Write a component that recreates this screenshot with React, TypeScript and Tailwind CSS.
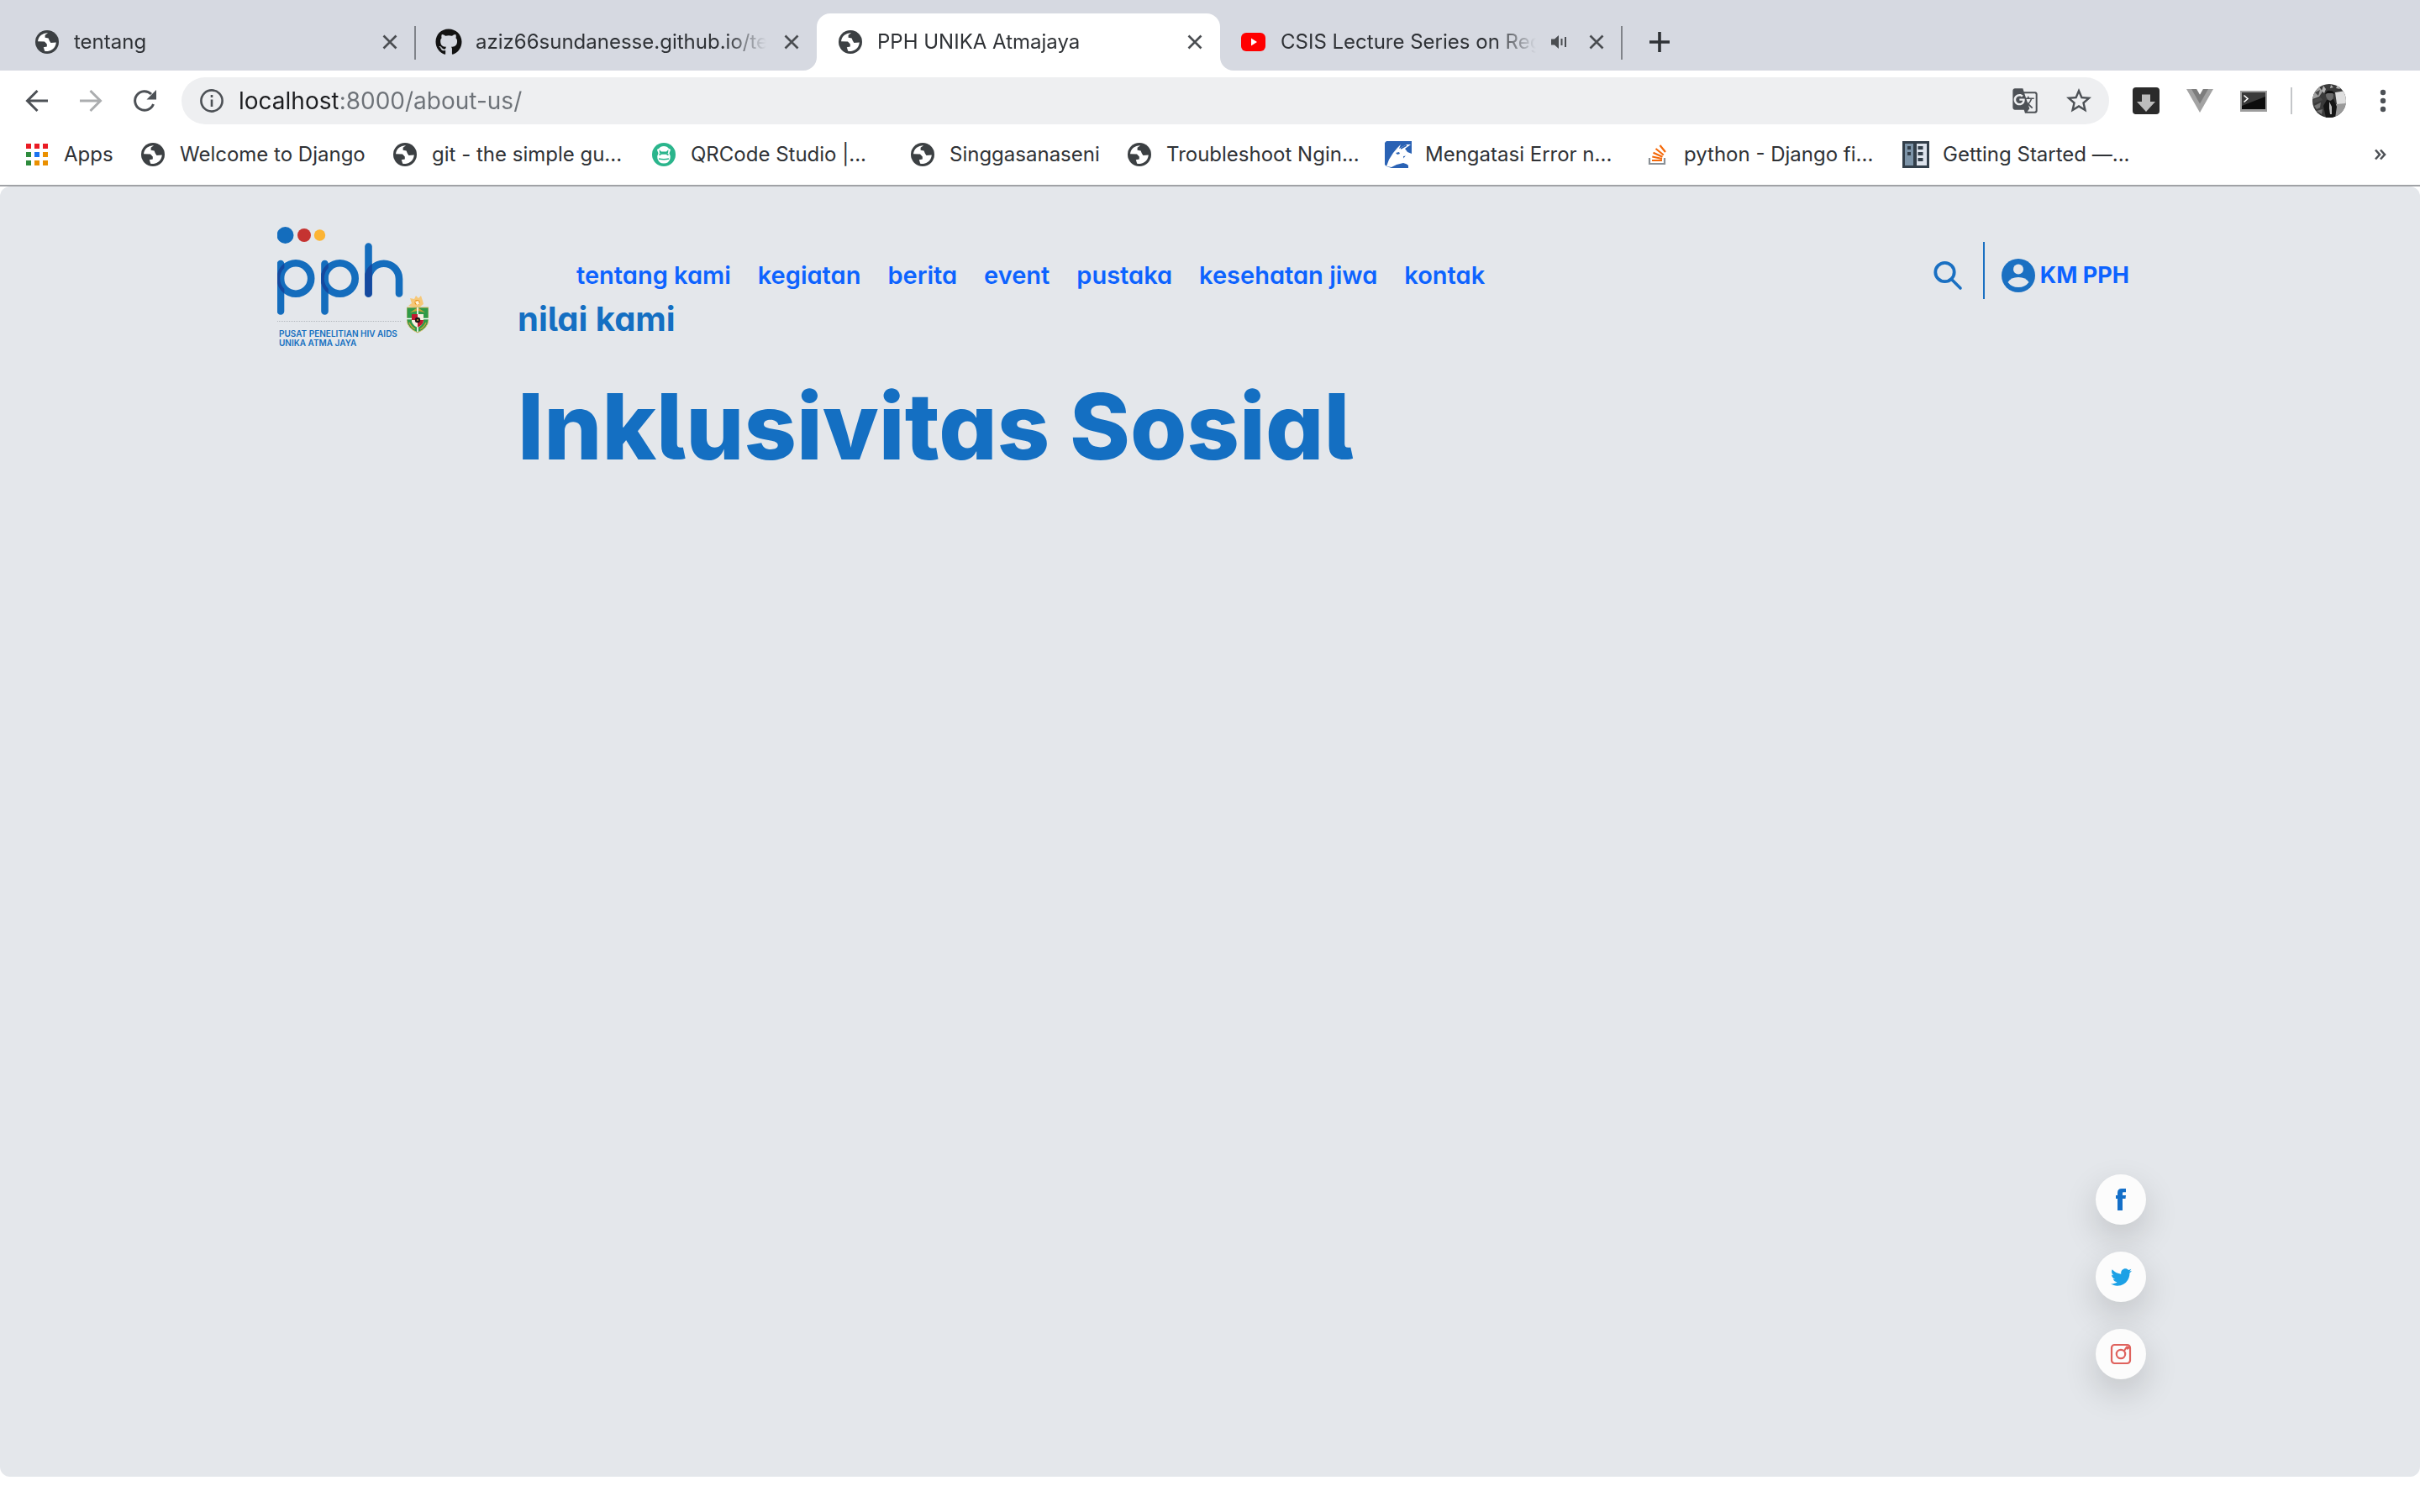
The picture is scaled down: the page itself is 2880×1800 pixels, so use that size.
import React from "react";
import { FaGithub, FaTwitter } from "react-icons/fa";
import { MdGTranslate, MdStarBorder } from "react-icons/md";

function Globe() {
  return (
    <svg viewBox="0 0 28 28" className="size-7 shrink-0" aria-hidden="true">
      <circle cx="14" cy="14" r="14" fill="#3c4043" />
      <path
        d="M3 13.2A11.2 11.2 0 0 1 15 3.2L11.6 5.8V8.8L15.6 9.4L16.8 12.4L18.4 15L24.8 14.6A11.2 11.2 0 0 1 11.2 24.8L9.8 20.2L13.8 19.4V16.4L11 13.6Z"
        fill="#fff"
      />
    </svg>
  );
}

function YouTubeIcon() {
  return (
    <svg viewBox="0 0 32 32" className="size-8 shrink-0" aria-hidden="true">
      <rect x="1" y="5" width="29" height="22" rx="6" fill="#f00" />
      <path d="M13 11.5L20 16L13 20.5Z" fill="#fff" />
    </svg>
  );
}

function AppsIcon() {
  const fills = ["#ea1c24", "#ea1c24", "#ea1c24", "#2e8b3d", "#1a73f0", "#ea9000", "#2e8b3d", "#ea9000", "#ea9000"];
  return (
    <svg viewBox="0 0 26 26" className="size-[26px] shrink-0" aria-hidden="true">
      {fills.map((f, i) => (
        <rect key={i} x={(i % 3) * 10} y={Math.floor(i / 3) * 10} width="6" height="6" fill={f} />
      ))}
    </svg>
  );
}

function MonkeyIcon() {
  return (
    <svg viewBox="0 0 28 28" className="size-7 shrink-0" aria-hidden="true">
      <circle cx="14" cy="14" r="14" fill="#2bb58c" />
      <path d="M6 8.500Q6 7 8 7Q10 4 14 4T20 7Q22 7 22 8.500L20.500 12.500Q22.500 16 21.500 19Q20 24.500 14 24.500T6.500 19Q5.500 16 7.500 12.500Z" fill="#fff" />
      <path d="M8.500 8L11 10.500H17L19.500 8L19 12.500L16.500 13H11.500L9 12.500Z" fill="#2bb58c" />
      <path d="M8.500 14.500L11 13H17L19.500 14.500M8 19Q14 20.500 20 19" stroke="#2bb58c" strokeWidth="1.600" fill="none" />
    </svg>
  );
}

function GoatIcon() {
  return (
    <svg viewBox="0 0 32 32" className="size-8 shrink-0" aria-hidden="true">
      <path d="M2 0H32V15L26 16L21 22L28 29V32H8L2 30L0 28V2Z" fill="#2a62b4" />
      <path d="M2 30L5 22L10 14L15 8L19 4L17 9L26 4L31 4L24 9L27 13L32 15L30 17L22 18L23 23L28 28L22 26L14 28L8 31Z" fill="#fff" />
      <path d="M13 14L17 13L18 15L15 16Z" fill="#2a62b4" />
      <path d="M19 9L26 5" stroke="#2a62b4" strokeWidth="1.500" />
    </svg>
  );
}

function StackIcon() {
  return (
    <svg viewBox="0 0 32 32" className="size-8 shrink-0" fill="none" aria-hidden="true">
      <path d="M7 20V27H25V20" stroke="#8a9096" strokeWidth="2.200" />
      <path d="M10 23H22M10.300 18.500L22 21M11.500 13.800L22.500 18.800M14.500 9L23.800 16.500M19.500 5L26 13" stroke="#f4690b" strokeWidth="2.200" />
    </svg>
  );
}

function CabinetIcon() {
  return (
    <svg viewBox="0 0 32 32" className="size-8 shrink-0" aria-hidden="true">
      <rect width="32" height="32" fill="#333f4a" />
      <rect x="3" y="3" width="10" height="26" fill="#7d94a8" />
      <rect x="17" y="3" width="12" height="26" fill="#dde3ec" />
      <path d="M6 6h4v4H6zM6 13h4v4H6zM18.500 6h6v4h-6zM18.500 13h6v4h-6zM18.500 20h6v4h-6z" fill="#333f4a" />
    </svg>
  );
}

function CloseIcon() {
  return (
    <svg viewBox="0 0 18 18" className="size-[18px]" aria-hidden="true">
      <path d="M1.500 1.500L16.500 16.500M16.500 1.500L1.500 16.500" stroke="#4a4d51" strokeWidth="2.600" />
    </svg>
  );
}

type TabProps = { icon: React.ReactNode; title: string; active?: boolean; sound?: boolean; divider?: boolean };

function Tab({ icon, title, active, sound, divider }: TabProps) {
  return (
    <div className={active ? "relative flex h-[68px] w-[480px] rounded-t-2xl bg-white pr-2 pl-6" : "relative flex h-[68px] w-[478px] pr-2 pl-6"}>
      <button type="button" role="tab" aria-selected={!!active} className="flex min-w-0 flex-1 items-center gap-4 text-left">
        <span className="flex w-8 shrink-0 justify-center">{icon}</span>
        <span className="flex-1 overflow-hidden whitespace-nowrap [mask-image:linear-gradient(90deg,#000_calc(100%-48px),transparent)]">{title}</span>
        {sound && (
          <svg viewBox="0 0 24 24" className="mr-0.5 size-6 shrink-0" aria-hidden="true">
            <path d="M2 8.500H6L11 4V20L6 15.500H2Z" fill="#4a4d51" />
            <path d="M14.500 8V16M19 6V18" stroke="#4a4d51" strokeWidth="2" />
          </svg>
        )}
      </button>
      <button type="button" aria-label={`Close ${title}`} className="ml-2 flex w-[44px] shrink-0 items-center justify-center">
        <CloseIcon />
      </button>
      {divider && <span className="absolute top-[15px] -right-px h-10 w-0.5 bg-[#808389]" />}
      {active && (
        <>
          <svg viewBox="0 0 16 16" className="absolute bottom-0 -left-4 size-4" aria-hidden="true">
            <path d="M16 0V16H0A16 16 0 0 0 16 0Z" fill="#fff" />
          </svg>
          <svg viewBox="0 0 16 16" className="absolute -right-4 bottom-0 size-4" aria-hidden="true">
            <path d="M0 0V16H16A16 16 0 0 1 0 0Z" fill="#fff" />
          </svg>
        </>
      )}
    </div>
  );
}

function Bookmark({ icon, label, width }: { icon: React.ReactNode; label: string; width: string }) {
  return (
    <a href="#" className={`flex shrink-0 items-center gap-4 whitespace-nowrap ${width}`}>
      <span className="flex w-8 shrink-0 justify-center">{icon}</span>
      {label}
    </a>
  );
}

function Toolbar() {
  return (
    <div className="flex h-16 items-center pr-10 pl-[30px]">
      <div className="flex gap-9">
        <button type="button" aria-label="Back">
          <svg viewBox="0 0 28 28" className="size-7" fill="none" stroke="#4d5156" strokeWidth="3">
            <path d="M14.500 2L2.500 14L14.500 26M2.500 14H27" />
          </svg>
        </button>
        <button type="button" aria-label="Forward">
          <svg viewBox="0 0 28 28" className="size-7" fill="none" stroke="#abadaf" strokeWidth="3">
            <path d="M13.500 2L25.500 14L13.500 26M25.500 14H1" />
          </svg>
        </button>
        <button type="button" aria-label="Reload">
          <svg viewBox="0 0 28 28" className="size-7" fill="none">
            <path d="M24.500 18A11.300 11.300 0 1 1 22 6" stroke="#4d5156" strokeWidth="3" />
            <path d="M28 1V12.500H16.500Z" fill="#4d5156" />
          </svg>
        </button>
      </div>
      <div className="ml-[30px] flex h-14 flex-1 items-center rounded-full bg-[#eeeff1] pr-[18px] pl-[22px]">
        <svg viewBox="0 0 28 28" className="size-7 shrink-0" fill="none" stroke="#4d5156" aria-hidden="true">
          <circle cx="14" cy="14" r="12.600" strokeWidth="2.600" />
          <path d="M14 12.500V21M14 7V10" strokeWidth="2.600" />
        </svg>
        <input
          type="text"
          aria-label="Address"
          defaultValue="localhost:8000/about-us/"
          className="ml-[18px] min-w-0 flex-1 bg-[linear-gradient(90deg,#1c1d20_118px,#6d7278_118px)] bg-clip-text p-0 text-[28px] leading-9 text-transparent outline-none"
        />
        <button type="button" aria-label="Translate this page">
          <MdGTranslate className="size-8 text-[#4d5156]" />
        </button>
        <button type="button" aria-label="Bookmark this page" className="ml-[30px]">
          <MdStarBorder className="size-9 text-[#4d5156]" />
        </button>
      </div>
      <div className="ml-7 flex items-center gap-8">
        <button type="button" aria-label="Downloader">
          <svg viewBox="0 0 32 32" className="size-8">
            <rect width="32" height="32" rx="4" fill="#2b2b2b" />
            <path d="M11 8.500H21V17H27L16 29L5 17H11Z" fill="#bdbdbd" />
          </svg>
        </button>
        <button type="button" aria-label="Vue devtools">
          <svg viewBox="0 0 32 32" className="size-8">
            <path d="M0 2H12L16 9L20 2H32L16 30Z" fill="#a3a3a3" />
            <path d="M6 2H12L16 9L20 2H26L16 19.500Z" fill="#7d7d7d" />
          </svg>
        </button>
        <button type="button" aria-label="Terminal">
          <svg viewBox="0 0 32 32" className="size-8">
            <rect x="0" y="4" width="32" height="25" fill="#9d9d9d" />
            <rect x="2" y="6" width="28" height="20" fill="#0c0c0c" />
            <path d="M2 6H30V11L2 22Z" fill="#3a3a3a" />
            <path d="M4.500 9.500L9 13.500L4.500 17.500" stroke="#fff" strokeWidth="1.600" fill="none" />
          </svg>
        </button>
      </div>
      <span className="ml-7 h-8 w-0.5 bg-[#c4c6c9]" />
      <button type="button" aria-label="Profile" className="ml-6">
        <svg viewBox="0 0 40 40" className="size-10">
          <defs>
            <clipPath id="avatar">
              <circle cx="20" cy="20" r="20" />
            </clipPath>
          </defs>
          <g clipPath="url(#avatar)">
            <rect width="40" height="40" fill="#3a3a3a" />
            <path d="M27 10L40 8V26L29 24Z" fill="#dedede" />
            <path d="M28 24L40 23V36L27 40Z" fill="#9a9a9a" />
            <path d="M2 8L8 3L12 9L8 15L0 18Z" fill="#a0a0a0" />
            <path d="M3 10L9 7L7 14ZM0 19L10 16L12 19L2 23Z" fill="#4a4a4a" />
            <path d="M13 2L16 6L14 11L11 8ZM30 1L33 6L28 5ZM22 1L25 4L21 5Z" fill="#b5b5b5" />
            <path d="M2 26L10 22L9 28L5 30ZM5 32L12 30L11 36Z" fill="#767676" />
            <path d="M16 40L13 26L17 19L25 18L29 27L27 40Z" fill="#151515" />
            <path d="M16 14Q16 9 20.500 9T25 14Q25 19 21 20Q17 19 16 14Z" fill="#6a6a6a" />
            <path d="M15 12Q17 7 21 8Q26 8 26 12L24 11L18 11Z" fill="#111" />
            <path d="M20 21L23 27L23 36L21 36L20 29Z" fill="#bbb" />
          </g>
        </svg>
      </button>
      <button type="button" aria-label="Menu" className="ml-10">
        <svg viewBox="0 0 8 28" className="h-7 w-2" fill="#4d5156">
          <circle cx="4" cy="4" r="3.200" />
          <circle cx="4" cy="14" r="3.200" />
          <circle cx="4" cy="24" r="3.200" />
        </svg>
      </button>
    </div>
  );
}

function Logo() {
  return (
    <a href="#" aria-label="pph" className="relative block w-[180px] shrink-0 text-[#146fc0]">
      <svg viewBox="0 0 150 114" className="h-[114px] w-[150px]" fill="none" aria-hidden="true">
        <circle cx="9.500" cy="10" r="10" fill="#146dbd" />
        <circle cx="32" cy="10" r="8" fill="#c53331" />
        <circle cx="50.500" cy="10" r="6.700" fill="#fcb434" />
        <g stroke="#146dbd" strokeWidth="8.600" strokeLinecap="round">
          <circle cx="22" cy="61.500" r="18.200" />
          <circle cx="74.500" cy="61.500" r="18.200" />
          <path d="M4 44V100.500M56.500 44V100.500M108.500 23.500V79.500" />
          <path d="M108.500 62A18.200 18.200 0 0 1 145 62V79.500" />
        </g>
        <g fill="#15499f">
          <path d="M8.300 43.500A22.500 22.500 0 0 0 0 56V67A22.500 22.500 0 0 0 8.300 79.500V74A18 18 0 0 1 8.300 49Z" />
          <path d="M60.800 43.500A22.500 22.500 0 0 0 52.200 56V67A22.500 22.500 0 0 0 60.800 79.500V74A18 18 0 0 1 60.800 49Z" />
          <path d="M112.800 44A22.500 22.500 0 0 0 104.200 56V79.500A4.300 4.300 0 0 0 112.800 79.500Z" />
        </g>
        <path d="M0 112.500H148" stroke="#b4b8bd" strokeWidth="1" strokeDasharray="1 1" />
      </svg>
      <span className="mt-2 block pl-0.5 text-[10px] leading-[11px] font-semibold whitespace-nowrap">
        PUSAT PENELITIAN HIV AIDS
        <br />
        UNIKA ATMA JAYA
      </span>
      <svg viewBox="0 0 26 46" className="absolute top-[81px] left-[154px] h-[46px] w-[26px]" aria-hidden="true">
        <path d="M4 4L9 5L11 1L14 4L17 1L19 7L20 11L15 15H9L2 13L6 10Z" fill="#f6c878" />
        <circle cx="12.500" cy="9" r="3" fill="#e9931c" />
        <path d="M10 8L14 7L15 11L12 12Z" fill="#fff3d6" />
        <path d="M0 15H26V30Q25 40 13 45Q1 40 0 30Z" fill="#2f9a48" stroke="#d5b96a" strokeWidth="1" />
        <path d="M4 21L13 15L22 21L13 19Z" fill="#c4a53a" />
        <path d="M13 15V44M0 28.500H26" stroke="#fff" strokeWidth="1.600" />
        <path d="M6 23H20V32Q18 37 13 39Q8 37 6 32Z" fill="#f7eee0" />
        <path d="M6 23H13V30H6ZM13 30H20Q20 36 13 38.500Z" fill="#c0182f" />
        <circle cx="13" cy="30" r="3.200" fill="#1c1a18" />
        <circle cx="13" cy="30" r="1" fill="#c99a3c" />
        <path d="M3 33Q5 38 10 41M23 33Q21 38 16 41" stroke="#c4a53a" strokeWidth="1.400" fill="none" />
      </svg>
    </a>
  );
}

const navItems = ["tentang kami", "kegiatan", "berita", "event", "pustaka", "kesehatan jiwa", "kontak"];

function SocialLinks() {
  const round = "flex size-[60px] items-center justify-center rounded-full bg-[#fcfcfc] shadow-[0_16px_40px_rgba(0,0,0,0.16)]";
  return (
    <div className="absolute right-[326px] bottom-[116px] flex flex-col gap-8">
      <a href="#" aria-label="Facebook" className={round}>
        <svg viewBox="0 0 12 26" className="h-[26px] w-3" aria-hidden="true">
          <path d="M2 26V12H0V8H2V5Q2 0 7 0H12V4.200H9Q8 4.200 8 5.500V8H12L11.500 12H8V26Z" fill="#146fc8" />
        </svg>
      </a>
      <a href="#" aria-label="Twitter" className={round}>
        <FaTwitter className="size-[25px] text-[#1da1e6]" />
      </a>
      <a href="#" aria-label="Instagram" className={round}>
        <svg viewBox="0 0 26 26" className="size-[26px]" fill="none" stroke="#df625d" strokeWidth="2.200">
          <rect x="2" y="2" width="22" height="22" rx="3.500" />
          <circle cx="13" cy="13" r="5.200" />
          <path d="M17 9L20 4.500H23M20 7L23 5" />
        </svg>
      </a>
    </div>
  );
}

export default function App() {
  return (
    <div className="flex min-h-screen flex-col bg-white font-['Inter',sans-serif] text-[#2f3236]">
      <header className="text-[24px] leading-8">
        <div role="tablist" className="flex h-[84px] items-end bg-[#d6d9e1] pl-4">
          <Tab icon={<Globe />} title="tentang" divider />
          <Tab icon={<FaGithub className="size-8 text-[#131313]" />} title="aziz66sundanesse.github.io/te" />
          <Tab icon={<Globe />} title="PPH UNIKA Atmajaya" active />
          <Tab icon={<YouTubeIcon />} title="CSIS Lecture Series on Reg" sound divider />
          <button type="button" aria-label="New tab" className="ml-8 flex h-[68px] items-center">
            <svg viewBox="0 0 26 26" className="size-[26px]">
              <path d="M13 1V25M1 13H25" stroke="#2f3236" strokeWidth="3.600" />
            </svg>
          </button>
        </div>
        <div className="pt-1">
          <Toolbar />
        </div>
        <nav aria-label="Bookmarks" className="flex h-[70px] items-center border-b-2 border-[#a0a2a6] pr-10 pb-1 pl-7">
          <Bookmark icon={<AppsIcon />} label="Apps" width="w-[138px]" />
          <Bookmark icon={<Globe />} label="Welcome to Django" width="w-[300px]" />
          <Bookmark icon={<Globe />} label="git - the simple gu..." width="w-[308px]" />
          <Bookmark icon={<MonkeyIcon />} label="QRCode Studio |..." width="w-[308px]" />
          <Bookmark icon={<Globe />} label="Singgasanaseni" width="w-[258px]" />
          <Bookmark icon={<Globe />} label="Troubleshoot Ngin..." width="w-[308px]" />
          <Bookmark icon={<GoatIcon />} label="Mengatasi Error n..." width="w-[308px]" />
          <Bookmark icon={<StackIcon />} label="python - Django fi..." width="w-[308px]" />
          <Bookmark icon={<CabinetIcon />} label="Getting Started —..." width="w-[308px]" />
          <button type="button" aria-label="More bookmarks" className="ml-auto">
            <svg viewBox="0 0 14 14" className="size-[14px]" fill="none" stroke="#4d5156" strokeWidth="2.600">
              <path d="M1 1.500L6 7L1 12.500M7 1.500L12 7L7 12.500" />
            </svg>
          </button>
        </nav>
      </header>

      <main className="relative mb-[42px] flex-1 rounded-xl bg-[#e4e7eb]">
        <div className="mx-auto flex w-full max-w-[2220px] items-start pt-12">
          <Logo />
          <div className="ml-[106px] flex-1">
            <div className="flex items-start justify-between pr-4">
              <nav
                aria-label="Main"
                className="flex gap-8 pt-[38px] pl-[70px] text-[29px] leading-10 font-semibold whitespace-nowrap text-[#0d63ff] [font-feature-settings:'cv05','cv11']"
              >
                {navItems.map((item) => (
                  <a key={item} href="#">
                    {item}
                  </a>
                ))}
              </nav>
              <div className="flex items-center pt-[18px]">
                <button type="button" aria-label="Search" className="pt-3">
                  <svg viewBox="0 0 36 36" className="size-9" fill="none" stroke="#1a70c2" strokeLinecap="round">
                    <circle cx="14.500" cy="14" r="11.200" strokeWidth="3.800" />
                    <path d="M23 23L33 33" strokeWidth="3.600" />
                  </svg>
                </button>
                <span className="ml-6 h-[68px] w-0.5 bg-[#1a70c2]" />
                <a href="#" className="ml-5 flex items-center gap-1.5 pt-3 text-[27px] leading-10 font-bold text-[#0d63ff]">
                  <svg viewBox="0 0 40 40" className="size-10" aria-hidden="true">
                    <circle cx="20" cy="20" r="20" fill="#1a70c2" />
                    <circle cx="20" cy="12.500" r="6" fill="#e4e7eb" />
                    <path d="M7.500 28Q11 22 20 22T32.500 28Q28 34 20 34T7.500 28Z" fill="#e4e7eb" />
                  </svg>
                  KM PPH
                </a>
              </div>
            </div>
            <section className="text-[#146fc2] [font-feature-settings:'cv05','cv11']">
              <p className="text-[40px] leading-[48px] font-bold">nilai kami</p>
              <h1 className="mt-[38px] text-[109px] leading-[130px] font-extrabold">Inklusivitas Sosial</h1>
            </section>
          </div>
        </div>
        <SocialLinks />
      </main>
    </div>
  );
}
